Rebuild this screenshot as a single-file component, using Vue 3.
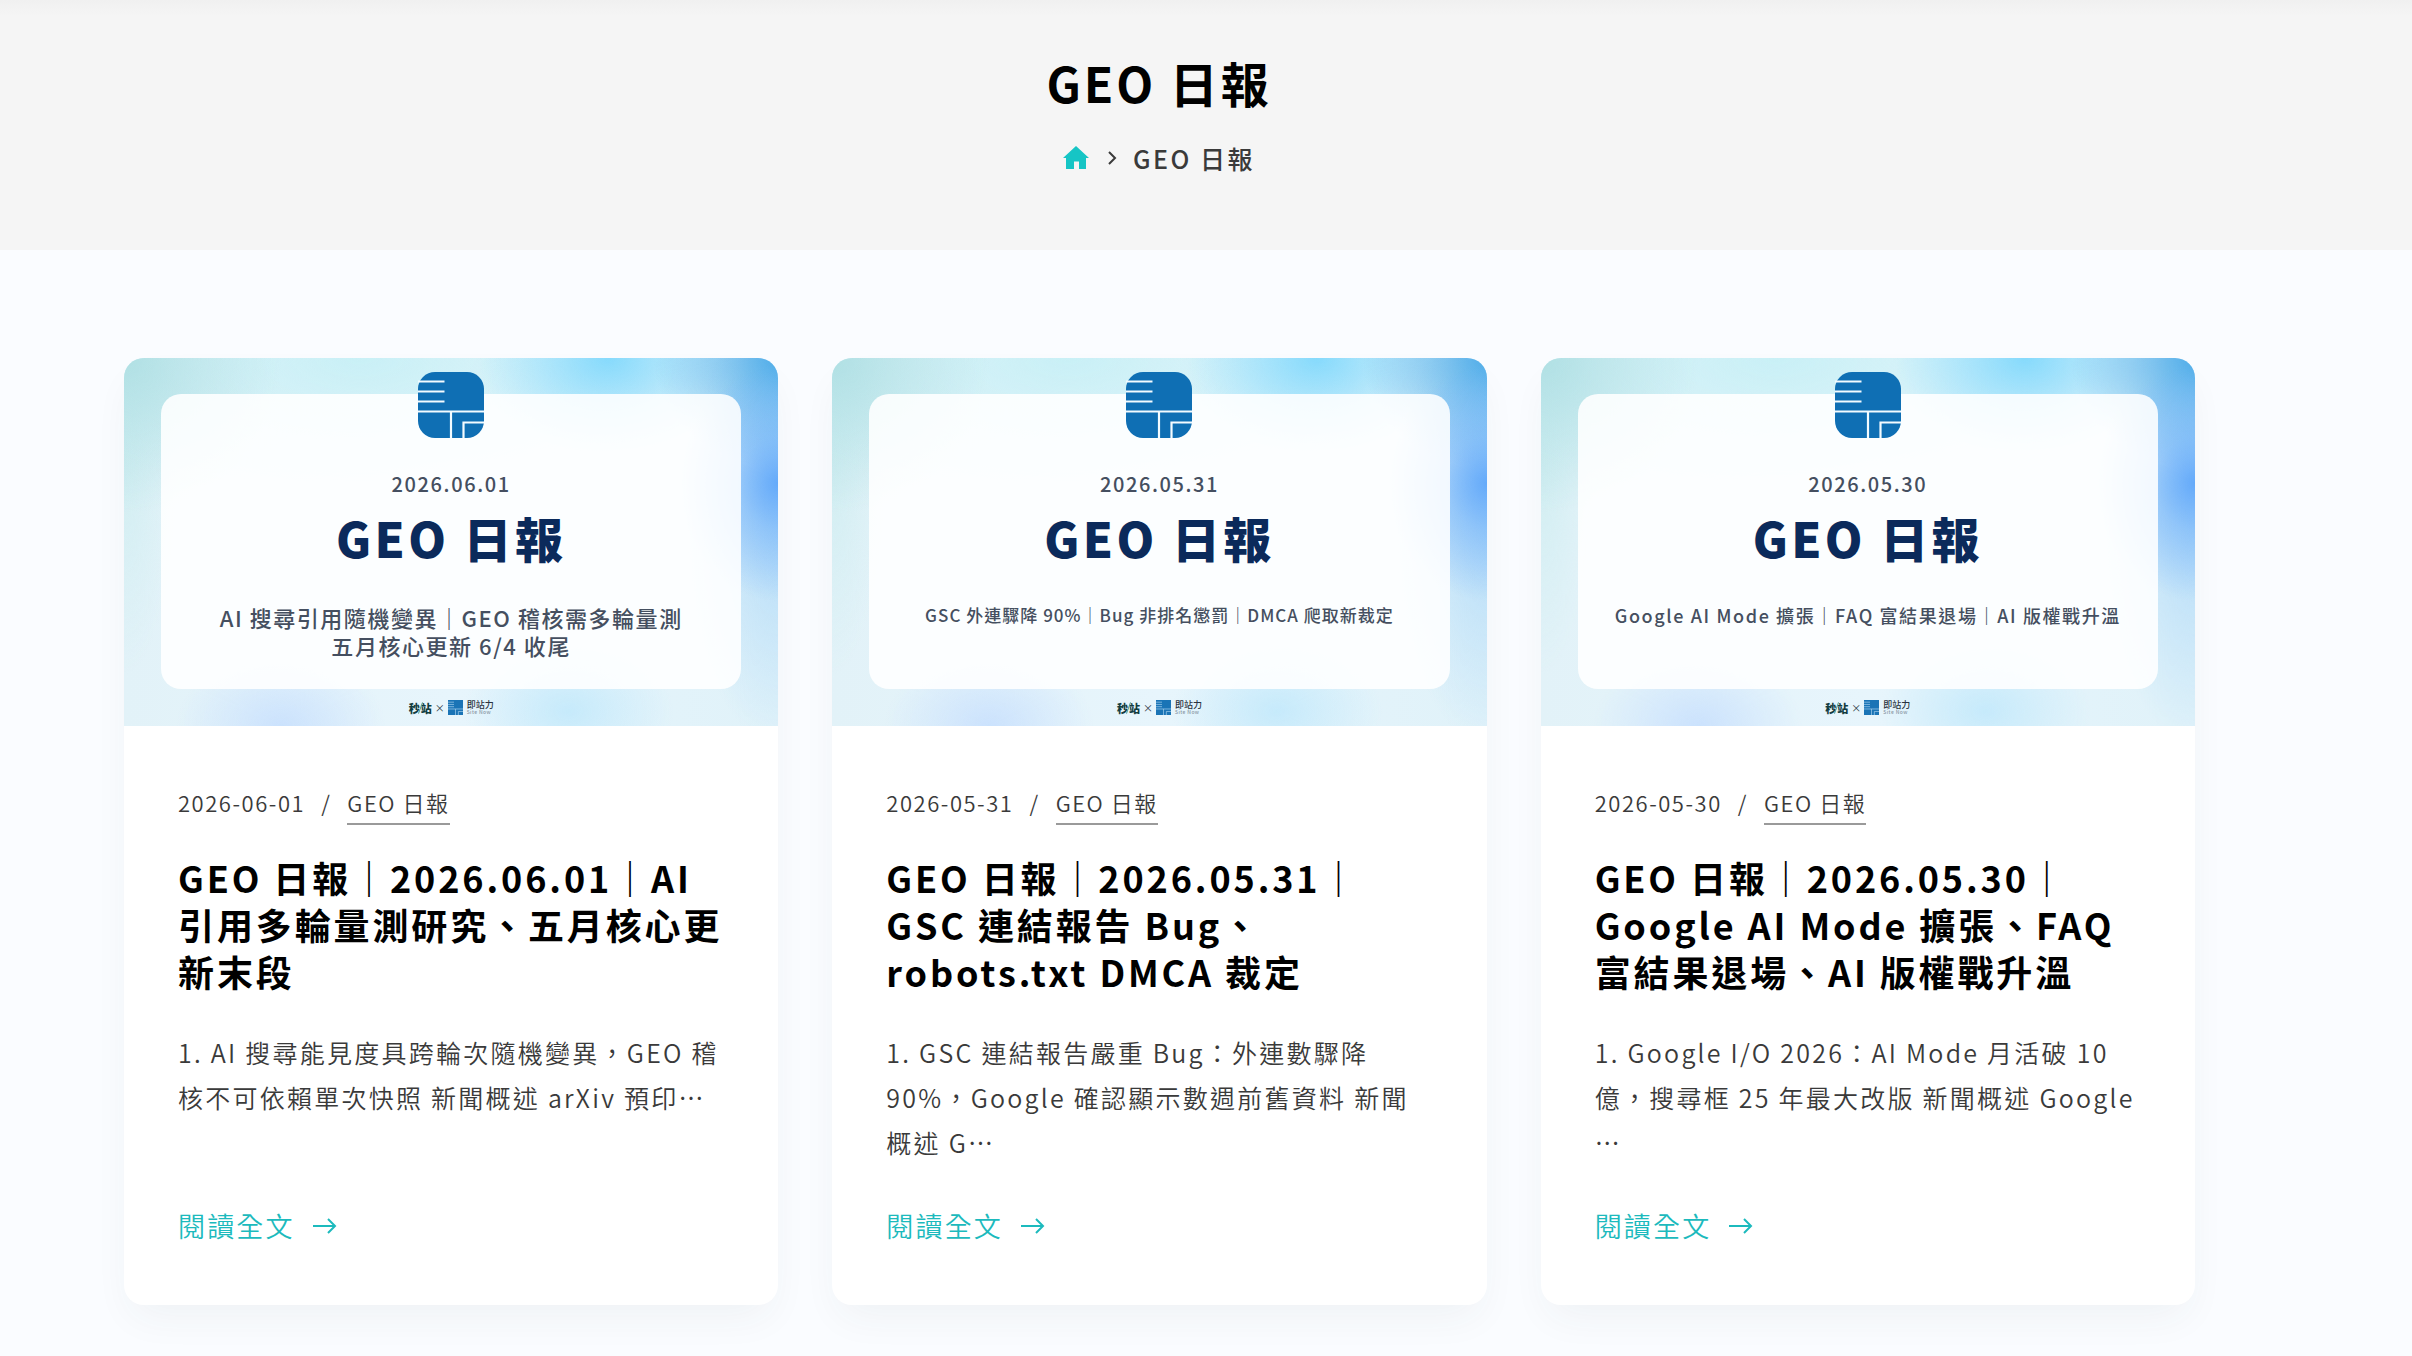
<script setup>
const posts = [
  {
    id: 1,
    date: '2026-06-01',
    cover: '2026.06.01',
    size: 'large',
    topics: ['AI 搜尋引用隨機變異｜GEO 稽核需多輪量測', '五月核心更新 6/4 收尾'],
    title: 'GEO 日報｜2026.06.01｜AI 引用多輪量測研究、五月核心更新末段',
    excerpt: '1. AI 搜尋能見度具跨輪次隨機變異，GEO 稽核不可依賴單次快照 新聞概述 arXiv 預印…',
  },
  {
    id: 2,
    date: '2026-05-31',
    cover: '2026.05.31',
    size: 'small',
    topics: ['GSC 外連驟降 90%｜Bug 非排名懲罰｜DMCA 爬取新裁定'],
    title: 'GEO 日報｜2026.05.31｜GSC 連結報告 Bug、robots.txt DMCA 裁定',
    excerpt: '1. GSC 連結報告嚴重 Bug：外連數驟降 90%，Google 確認顯示數週前舊資料 新聞概述 G…',
  },
  {
    id: 3,
    date: '2026-05-30',
    cover: '2026.05.30',
    size: 'medium',
    topics: ['Google AI Mode 擴張｜FAQ 富結果退場｜AI 版權戰升溫'],
    title: 'GEO 日報｜2026.05.30｜Google AI Mode 擴張、FAQ 富結果退場、AI 版權戰升溫',
    excerpt: '1. Google I/O 2026：AI Mode 月活破 10 億，搜尋框 25 年最大改版 新聞概述 Google …',
  },
]
</script>

<template>
  <div class="page" lang="zh-Hant">
    <header class="hero">
      <h1>GEO 日報</h1>
      <nav class="crumbs" aria-label="Breadcrumb">
        <a href="#" aria-label="Home">
          <svg class="home" viewBox="0 0 26 24" aria-hidden="true">
            <path d="M13 0 26 12H23V23H16V15.500H11V23H3V12H0z" fill="#16c5c5" />
          </svg>
        </a>
        <svg class="chevron" viewBox="0 0 10 14" aria-hidden="true">
          <path d="M2 1l6 6-6 6" fill="none" stroke="#3a3a3a" stroke-width="2" />
        </svg>
        <span>GEO 日報</span>
      </nav>
    </header>

    <main class="posts">
      <article v-for="post in posts" :key="post.id" class="card">
        <div class="cover">
          <div class="panel">
            <svg class="emblem" viewBox="0 0 66 66" aria-hidden="true">
              <rect width="66" height="66" rx="17" fill="#0f6fb4" />
              <path d="M0 9.500h26.500M0 19.500h26.500M0 29.500h26.500M0 39.500h66M33 39.500V66M45.500 66V50.500H66" fill="none" stroke="#f3fbff" stroke-width="2.200" />
            </svg>
            <p class="cover-date">{{ post.cover }}</p>
            <p class="cover-title">GEO 日報</p>
            <div class="topics" :class="post.size">
              <p v-for="line in post.topics" :key="line">{{ line }}</p>
            </div>
          </div>
          <div class="brands">
            <span class="brand-a">秒<i></i>站</span>
            <span class="times">×</span>
            <svg class="mark" viewBox="0 0 66 66" aria-hidden="true">
              <rect width="66" height="66" fill="#1a74b6" />
              <path d="M0 9.500h26.500M0 19.500h26.500M0 29.500h26.500M0 39.500h66M33 39.500V66M45.500 66V50.500H66" fill="none" stroke="#a9d2ee" stroke-width="3" />
            </svg>
            <span class="brand-b">即站力<small>Site Now</small></span>
          </div>
        </div>
        <div class="body">
          <div class="meta">
            <time :datetime="post.date">{{ post.date }}</time>
            <span>/</span>
            <a href="#">GEO 日報</a>
          </div>
          <h2>{{ post.title }}</h2>
          <p class="excerpt">{{ post.excerpt }}</p>
          <a class="more" href="#">
            閱讀全文
            <svg viewBox="0 0 24 18" aria-hidden="true">
              <path d="M0 9h22M15 2l7 7-7 7" fill="none" stroke="currentColor" stroke-width="2" />
            </svg>
          </a>
        </div>
      </article>
    </main>
  </div>
</template>

<style>
body {
  margin: 0;
  background: #fafcff;
}
</style>

<style scoped>
.page {
  font-family: "Noto Sans CJK TC", sans-serif;
  font-weight: 350;
  color: #3a3a3a;
}
h1,
h2,
p {
  margin: 0;
}
a {
  color: inherit;
  text-decoration: none;
}
.hero {
  display: flex;
  flex-direction: column;
  align-items: center;
  gap: 20px;
  padding: 46px 94px 72px 0;
  background: linear-gradient(#f0f0f0, #f5f5f5 16px);
}
h1 {
  font-size: 48px;
  line-height: 72px;
  font-weight: 700;
  letter-spacing: 0.06em;
  color: #000;
}
.crumbs {
  display: flex;
  align-items: center;
  font-size: 25px;
  line-height: 40px;
  font-weight: 500;
  letter-spacing: 0.1em;
}
.home {
  display: block;
  width: 26px;
  height: 24px;
}
.chevron {
  width: 10px;
  height: 14px;
  margin: 0 16px 0 18px;
}
.posts {
  display: grid;
  grid-template-columns: repeat(3, 1fr);
  gap: 54px;
  padding: 108px 217px 50px 124px;
}
.card {
  display: flex;
  flex-direction: column;
  border-radius: 20px;
  background: #fff;
  box-shadow: 0 18px 40px -8px rgba(50, 60, 70, 0.06);
  overflow: hidden;
}
.cover {
  display: flex;
  flex-direction: column;
  box-sizing: border-box;
  aspect-ratio: 16 / 9;
  padding: 36px 37px 0;
  color: #454f60;
  background:
    radial-gradient(ellipse 15% 32% at 100% 34%, #64aafa, #64aafa80 40%, #64aafa00),
    radial-gradient(ellipse 20% 30% at 101% 0, #48a9e8, #48a9e800),
    radial-gradient(ellipse 20% 26% at 74% 0, #86dafc, #86dafc00),
    radial-gradient(ellipse 24% 42% at 0 0, #b0e0e4, #b0e0e400),
    radial-gradient(ellipse 50% 40% at 36% 0, #c9f0f6, #c9f0f600),
    radial-gradient(ellipse 8% 56% at 0 30%, #d2eef2, #d2eef200),
    radial-gradient(ellipse 16% 20% at 24% 100%, #cbe2fd, #cbe2fd00),
    radial-gradient(ellipse 16% 20% at 68% 96%, #c6eafb, #c6eafb00),
    radial-gradient(ellipse 14% 60% at 100% 45%, #b5dcf8, #b5dcf800),
    linear-gradient(90deg, #e2f2f8, #e7f5fc 50%, #e0f2f9);
}
.panel {
  display: flex;
  flex: 1;
  flex-direction: column;
  align-items: center;
  border-radius: 20px;
  background: rgba(255, 255, 255, 0.88);
}
.emblem {
  flex: none;
  width: 66px;
  height: 66px;
  margin-top: -22px;
}
.cover-date {
  margin-top: 30px;
  font-size: 20px;
  line-height: 32px;
  font-weight: 500;
  letter-spacing: 0.08em;
}
.cover-title {
  font-size: 48px;
  line-height: 74px;
  font-weight: 900;
  letter-spacing: 0.07em;
  color: #0b2a5b;
}
.topics {
  margin-top: 29px;
  line-height: 24px;
  font-weight: 500;
  text-align: center;
  white-space: nowrap;
}
.large {
  font-size: 22px;
  line-height: 28px;
  letter-spacing: 0.07em;
}
.medium {
  font-size: 18px;
  letter-spacing: 0.09em;
}
.small {
  font-size: 17px;
  letter-spacing: 0.06em;
}
.brands {
  display: flex;
  align-items: center;
  justify-content: center;
  height: 37px;
  color: #2a3340;
}
.brand-a {
  display: flex;
  align-items: center;
  font-size: 11px;
  font-weight: 900;
  color: #123c40;
}
.brand-a i {
  width: 1px;
  height: 12px;
  background: #4f9a90;
  transform: rotate(20deg);
}
.times {
  margin: 0 3px;
  font-size: 10px;
}
.mark {
  width: 15px;
  height: 15px;
  margin-right: 4px;
}
.brand-b {
  display: flex;
  flex-direction: column;
  font-size: 9px;
  line-height: 9px;
  font-weight: 500;
}
.brand-b small {
  font-size: 5px;
  line-height: 6px;
  letter-spacing: 0.08em;
  color: #8a97a5;
}
.body {
  display: flex;
  flex: 1;
  flex-direction: column;
  align-items: flex-start;
  padding: 58px 53px 59px 54px;
}
.meta {
  display: flex;
  gap: 16px;
  font-size: 22px;
  line-height: 36px;
  letter-spacing: 0.07em;
}
.meta a {
  padding-bottom: 3px;
  border-bottom: 2px solid #9a9a9a;
}
h2 {
  margin-top: 29px;
  font-size: 36px;
  line-height: 47px;
  font-weight: 700;
  letter-spacing: 0.08em;
  color: #000;
}
.excerpt {
  margin: 35px 0 41px;
  font-size: 25px;
  line-height: 45px;
  letter-spacing: 0.09em;
}
.more {
  display: flex;
  align-items: center;
  gap: 18px;
  margin-top: auto;
  font-size: 27px;
  line-height: 40px;
  letter-spacing: 0.08em;
  color: #1cbabd;
}
.more svg {
  width: 24px;
  height: 18px;
}
</style>
